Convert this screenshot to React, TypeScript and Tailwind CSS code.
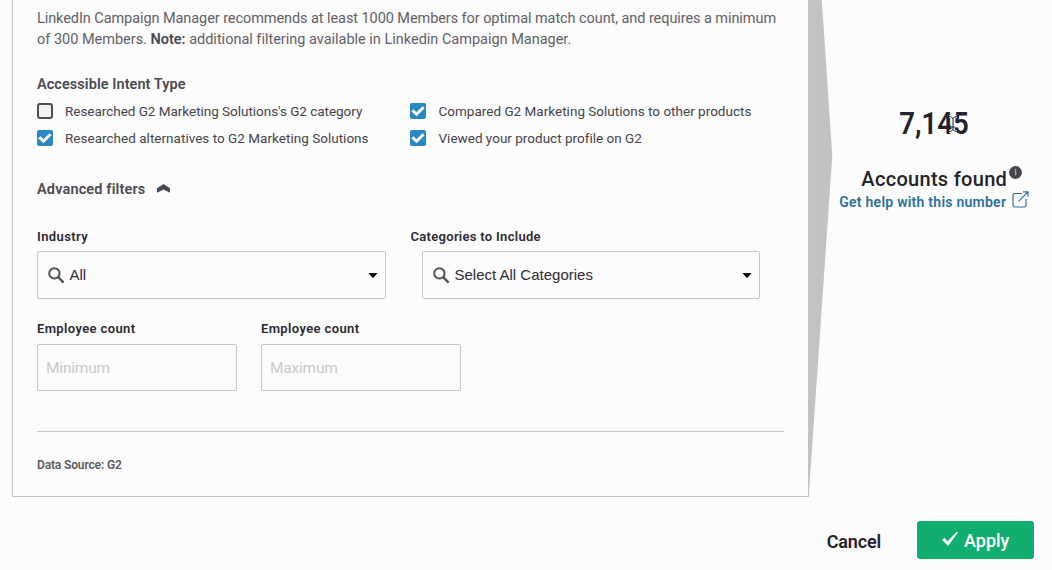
import React from "react";

function CheckBox({ label, checked, labelClass }: { label: string; checked: boolean; labelClass: string }) {
  return (
    <label className="flex h-[27px] items-center">
      <span
        className={
          checked
            ? "mb-px flex size-4 shrink-0 items-center justify-center rounded-[2px] bg-[#2888c3]"
            : "mb-px size-4 shrink-0 rounded-[3px] border-2 border-[#4f4d55] bg-[#f4f4f4]"
        }
      >
        {checked && (
          <svg viewBox="0 0 16 16" className="size-4" fill="none" stroke="#fff" strokeWidth="3">
            <path d="M2.4 7.2 6.5 11.2 13.6 4.2" />
          </svg>
        )}
      </span>
      <span className={"whitespace-nowrap text-[13.5px] text-[#45434b] " + labelClass}>{label}</span>
    </label>
  );
}

function Select({ value }: { value: string }) {
  return (
    <div className="flex h-12 items-center rounded-[2px] border border-[#c6c6c6] pr-[7.5px] pl-[10px]">
      <svg viewBox="0 0 17 17" className="size-[17px] shrink-0" fill="none" stroke="#555" strokeWidth="2">
        <circle cx="6.4" cy="6.4" r="5.2" />
        <path d="M10.2 10.2 15.6 15.6" strokeWidth="2.4" />
      </svg>
      <span className="ml-[4.5px] flex-1 font-['Liberation_Sans',sans-serif] text-[15px] whitespace-nowrap text-[#2f2d36]">
        {value}
      </span>
      <svg viewBox="0 0 10 5" className="h-[5px] w-[10px]" fill="#000">
        <path d="M.5 0H9.5L6 4.3Q5 5.2 4 4.3Z" />
      </svg>
    </div>
  );
}

function CountField({ placeholder }: { placeholder: string }) {
  return (
    <div className="w-[200px]">
      <div className="h-[25px] text-[13px] leading-[20px] font-semibold tracking-[0.37px] text-[#2b2932]">Employee count</div>
      <input
        placeholder={placeholder}
        className="h-[47px] w-full rounded-[2px] border border-[#c6c6c6] bg-transparent px-2 pt-px text-[15.5px] tracking-[-0.2px] outline-none placeholder:text-[#c9c9c9]"
      />
    </div>
  );
}

export default function App() {
  return (
    <div className="flex h-[570px] w-[1052px] flex-col overflow-hidden bg-[#fcfcfc] font-[Roboto,sans-serif] text-[#24222c]">
      <div className="flex h-[497px] shrink-0">
        <main className="ml-3 flex w-[797px] flex-col border border-t-0 border-[#c4c4c4] pr-6 pl-6">
          <p className="pt-[8px] text-[14.5px] leading-[21px] whitespace-nowrap text-[#626066]">
            <span className="tracking-[-0.075px]">
              LinkedIn Campaign Manager recommends at least 1000 Members for optimal match count, and requires a minimum
            </span>
            <br />
            <span className="tracking-[-0.01px]">
              of 300 Members. <b className="font-semibold text-[#4b4951]">Note:</b> additional filtering available in Linkedin Campaign Manager.
            </span>
          </p>
          <h3 className="mt-[24px] h-[24px] text-[14.5px] leading-[22px] font-semibold tracking-[0.06px] text-[#4b4951]">
            Accessible Intent Type
          </h3>
          <div className="grid grid-cols-[373px_1fr]">
            <CheckBox checked={false} label="Researched G2 Marketing Solutions's G2 category" labelClass="ml-3 tracking-[-0.03px]" />
            <CheckBox checked label="Compared G2 Marketing Solutions to other products" labelClass="ml-[12.5px] tracking-[0.01px]" />
            <CheckBox checked label="Researched alternatives to G2 Marketing Solutions" labelClass="ml-3 tracking-[0.02px]" />
            <CheckBox checked label="Viewed your product profile on G2" labelClass="ml-[12.5px] tracking-[0.01px]" />
          </div>
          <div className="mt-[27px] flex h-[22px] items-center">
            <h3 className="text-[14.5px] leading-[22px] font-semibold tracking-[0.15px] whitespace-nowrap text-[#4b4951]">
              Advanced filters
            </h3>
            <svg viewBox="0 0 13 9" className="mb-[4px] ml-[11.5px] h-[9px] w-[13px]" fill="#4b4951">
              <path d="M6.5 0 13 4.2V8.8L6.5 5.4 0 8.8V4.2Z" />
            </svg>
          </div>
          <div className="mt-[26px] grid grid-cols-[349px_350px] gap-x-6">
            <div>
              <div className="h-[24px] text-[13px] leading-[20px] font-semibold tracking-[0.4px] text-[#2b2932]">Industry</div>
              <Select value="All" />
            </div>
            <div>
              <div className="h-[24px] pl-[.5px] text-[13px] leading-[20px] font-semibold tracking-[0.3px] text-[#2b2932]">
                Categories to Include
              </div>
              <div className="pl-3">
                <Select value="Select All Categories" />
              </div>
            </div>
          </div>
          <div className="mt-[20px] flex gap-6">
            <CountField placeholder="Minimum" />
            <CountField placeholder="Maximum" />
          </div>
          <div className="mt-[40px] border-t border-[#c9c9c9]" />
          <div className="mt-[24px] text-[12px] leading-[18px] font-semibold tracking-[-0.14px] text-[#5b595f]">Data Source: G2</div>
        </main>
        <svg viewBox="0 0 24 497" className="h-[497px] w-6 shrink-0">
          <path d="M0 0H12.8L23.3 156 0 492Z" fill="#c2c2c2" />
        </svg>
        <aside className="flex flex-1 flex-col items-center pt-[104px] pr-[16.5px]">
          <div className="relative h-[40px] text-[31px] leading-[40px] font-semibold">
            <span className="inline-block scale-x-[.89]">7,145</span>
            <svg viewBox="0 0 10 18" className="absolute top-[11px] left-[53px] h-[18px] w-[10px]" fill="none">
              <path d="M1 1.5Q4 1.5 5 3.5 6 1.5 9 1.5M5 3V15M1 16.5Q4 16.5 5 14.5 6 16.5 9 16.5M3 12H7" stroke="#fff" strokeWidth="2.6" />
              <path d="M1 1.5Q4 1.5 5 3.5 6 1.5 9 1.5M5 3V15M1 16.5Q4 16.5 5 14.5 6 16.5 9 16.5M3 12H7" stroke="#222" />
            </svg>
          </div>
          <div className="relative mt-[21px] h-[27px]">
            <span className="block text-[20px] leading-[28px] font-medium tracking-[0.3px] whitespace-nowrap">Accounts found</span>
            <svg viewBox="0 0 13 13" className="absolute top-px -right-[15px] size-[13px]">
              <circle cx="6.5" cy="6.5" r="6.4" fill="#47454a" />
              <path d="M5.6 5.4H6.8V9.4" stroke="#ccc" fill="none" />
              <circle cx="6.6" cy="3.6" r=".8" fill="#ccc" />
            </svg>
          </div>
          <div className="flex h-[20px] items-center text-[#2c719c]">
            <span className="text-[14px] leading-[20px] font-semibold tracking-[0.25px] whitespace-nowrap">Get help with this number</span>
            <svg viewBox="0 0 17 17" className="mb-[5px] ml-[6px] size-[17px]" fill="none" stroke="currentColor" strokeWidth="1.2">
              <path d="M10 2.5H2.6Q1 2.5 1 4V14.5Q1 16 2.6 16H12.4Q14 16 14 14.5V8" />
              <path d="M6.5 10.3 16 .8M11 .8H16V5.8" />
            </svg>
          </div>
        </aside>
      </div>
      <footer className="flex justify-end pt-[24px] pr-[18px]">
        <button className="mr-9 h-[40px] text-[18px] font-semibold tracking-[-0.15px]">Cancel</button>
        <button className="flex h-[38px] w-[117px] items-center rounded-[3px] bg-[#12ae70] pl-[25px] text-[18px] font-medium text-white">
          <svg viewBox="0 0 16 14" className="mb-[3px] h-[14px] w-4" fill="#fff">
            <path d="M0 7.8 2.5 5.8 5.4 9.4 14.5 0 16 .6 6 14Z" />
          </svg>
          <span className="ml-[6px] pt-px">Apply</span>
        </button>
      </footer>
    </div>
  );
}
